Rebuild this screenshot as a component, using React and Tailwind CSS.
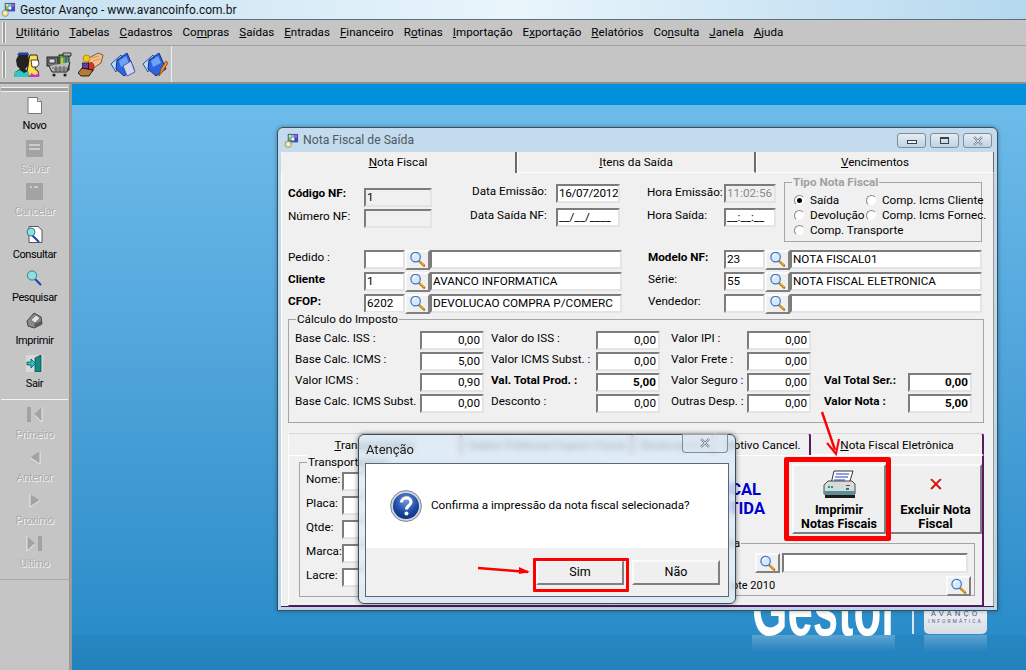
import { useId } from 'react';

const font = "font-['Roboto',sans-serif]";
const sunken = 'border-2 border-t-[#7c7c7c] border-l-[#7c7c7c] border-r-[#e4e4e4] border-b-[#e4e4e4]';
const raised = 'border-2 border-t-[#fbfbfb] border-l-[#fbfbfb] border-r-[#808080] border-b-[#808080] bg-[#efefef]';

const menus = [
  ['', 'U', 'tilitário'], ['', 'T', 'abelas'], ['', 'C', 'adastros'], ['Co', 'm', 'pras'], ['', 'S', 'aídas'],
  ['', 'E', 'ntradas'], ['', 'F', 'inanceiro'], ['R', 'o', 'tinas'], ['', 'I', 'mportação'], ['E', 'x', 'portação'],
  ['', 'R', 'elatórios'], ['Co', 'n', 'sulta'], ['', 'J', 'anela'], ['', 'A', 'juda'],
];

function AppIcon({ className }) {
  return (
    <svg viewBox="0 0 16 16" className={className}>
      <rect x="4" y="1" width="11" height="9" fill="#3a4fb0" />
      <rect x="5" y="2" width="3" height="3" fill="#ffe14d" />
      <rect x="8" y="2" width="3" height="3" fill="#48d8d8" />
      <rect x="11" y="2" width="3" height="3" fill="#d84ac0" />
      <rect x="5" y="5" width="3" height="3" fill="#60d060" />
      <rect x="8" y="5" width="3" height="3" fill="#ffffff" />
      <circle cx="4.5" cy="12" r="3.4" fill="#e8e0a0" stroke="#807850" strokeWidth="0.7" />
      <circle cx="4.5" cy="12" r="1" fill="#fff" />
    </svg>
  );
}

function Lupa() {
  return (
    <svg viewBox="0 0 18 18" className="w-[17px] h-[17px]">
      <path d="M10.5 10.5 L16 15.5" stroke="#b87a10" strokeWidth="2.6" strokeLinecap="round" />
      <path d="M11.5 11 L15.5 14.6" stroke="#f5c542" strokeWidth="1" strokeLinecap="round" />
      <circle cx="7" cy="6.5" r="5" fill="#d6e8fb" stroke="#3f76c8" strokeWidth="1.3" />
      <path d="M4 6 A3.2 3.2 0 0 1 7 3.2" stroke="#ffffff" strokeWidth="1.4" fill="none" />
    </svg>
  );
}

function People() {
  return (
    <svg viewBox="0 0 26 25" className="w-[26px] h-[25px]">
      <path d="M15 7 L16 3 H23 L24 9 L22 12 L21 17 L24 19 L25 24 H12 L14 14Z" fill="#ffe14d" stroke="#000" strokeWidth="0.8" />
      <path d="M17 8 H24 L25 12 L23 15 H18Z" fill="#fff" stroke="#000" strokeWidth="0.7" />
      <path d="M2 8 L5 2 H14 L15 8 L14 14 L11 17 L14 19 L15 25 H0 L1 20 L6 17 L3 14Z" fill="#222" />
      <path d="M3 3 L5 0.5 H14 L15 3Z" fill="#2c3f9c" />
      <path d="M0 25 L1 20 L6 18 L10 21 L14 19 L15 25Z" fill="#30c8c0" />
      <path d="M16 25 L17 21 L21 23 L25 21 V25Z" fill="#d030c0" />
    </svg>
  );
}

function Cart() {
  return (
    <svg viewBox="0 0 26 25" className="w-[26px] h-[25px]">
      <rect x="1" y="5" width="11" height="9" fill="#777" stroke="#000" strokeWidth="0.8" />
      <rect x="3" y="7" width="6" height="4" fill="#ddd" stroke="#000" strokeWidth="0.6" />
      <rect x="13" y="3" width="10" height="15" fill="#59a04a" stroke="#000" strokeWidth="0.8" />
      <rect x="15" y="6" width="2" height="10" fill="#d9c23a" />
      <rect x="19" y="5" width="2" height="11" fill="#3c62b4" />
      <path d="M17 1 H25 V4 H17Z" fill="#bbb" stroke="#000" strokeWidth="0.7" />
      <path d="M3 14 L6 20 H21 L24 10" fill="#bbb" stroke="#222" strokeWidth="1" />
      <path d="M6 16 H22 M8 18 H21 M10 14 V20 M14 14 V20 M18 14 V20" stroke="#444" strokeWidth="0.7" />
      <circle cx="8" cy="23" r="1.6" fill="#222" />
      <circle cx="19" cy="23" r="1.6" fill="#222" />
    </svg>
  );
}

function Hand() {
  return (
    <svg viewBox="0 0 26 25" className="w-[26px] h-[25px]">
      <path d="M11 6 L20 1 L25 3 L23 11 L14 17 L10 14Z" fill="#f4c090" stroke="#6a4020" strokeWidth="0.8" />
      <path d="M14 6 L21 4 M15 9 L22 7" stroke="#c08050" strokeWidth="0.7" />
      <circle cx="8.5" cy="6.5" r="3.5" fill="#f5c518" stroke="#8a6a00" strokeWidth="0.6" />
      <ellipse cx="13" cy="15" rx="3" ry="4.5" fill="#d8322a" stroke="#701010" strokeWidth="0.6" />
      <rect x="4.5" y="11" width="6" height="6" fill="#6040a8" stroke="#000" strokeWidth="0.6" />
      <path d="M0 21 L4 16 L15 18 L11 24 H3Z" fill="#b87838" stroke="#000" strokeWidth="0.8" />
    </svg>
  );
}

function Folders({ pencil }) {
  return (
    <svg viewBox="0 0 26 25" className="w-[26px] h-[25px]">
      <path d="M1 12 L11 3 L14 8 L6 20Z" fill="#b8d8f8" stroke="#103090" strokeWidth="0.8" />
      <path d="M7 8 L17 1 L24 17 L14 24 L6 17Z" fill="#2c64e0" stroke="#0c2478" strokeWidth="0.9" />
      <path d="M9 9 L16 4 L19 11 L11 15Z" fill="#6fa2f4" />
      {pencil ? (
        <path d="M17 24 L19 17 L24 9 L26 11 L21 19Z" fill="#f09020" stroke="#803000" strokeWidth="0.7" />
      ) : (
        <path d="M13 14 L21 9 L25 20 L17 24Z" fill="#d0d4f0" stroke="#30409c" strokeWidth="0.8" />
      )}
    </svg>
  );
}

function PageIcon() {
  return (
    <svg viewBox="0 0 16 17" className="w-[16px] h-[17px]">
      <path d="M1 .5 H10.5 L14.5 4.5 V16.5 H1Z" fill="#fff" stroke="#777" />
      <path d="M10.5 .5 V4.5 H14.5" fill="#ddd" stroke="#777" />
    </svg>
  );
}

function GrayDoc({ lines }) {
  return (
    <svg viewBox="0 0 17 17" className="w-[17px] h-[17px]">
      <rect x="0" y="0" width="17" height="17" fill="#a3a3a3" />
      <path d={lines} stroke="#f5f5f5" strokeWidth="1" />
    </svg>
  );
}

function ConsultIcon() {
  return (
    <svg viewBox="0 0 17 17" className="w-[17px] h-[17px]">
      <path d="M3 .5 H12 L16 4 V16.5 H3Z" fill="#fff" stroke="#555" />
      <path d="M6 9 L13 16" stroke="#1a3fb0" strokeWidth="2" />
      <circle cx="5" cy="6" r="4" fill="#8fe0e0" stroke="#3a7a90" />
    </svg>
  );
}

function SearchIcon() {
  return (
    <svg viewBox="0 0 17 17" className="w-[17px] h-[17px]">
      <path d="M9 10 L15 16" stroke="#1a3fb0" strokeWidth="2" />
      <circle cx="6" cy="6.5" r="4.6" fill="#8fe0e0" stroke="#3a7a90" />
    </svg>
  );
}

function SidePrinter() {
  return (
    <svg viewBox="0 0 17 17" className="w-[17px] h-[17px]">
      <path d="M1 9 L8 1 L15 5 L16 12 L8 16 L2 14Z" fill="#8a8a8a" stroke="#444" />
      <path d="M5 8 L10 3 L14 6 L9 11Z" fill="#e4e4e4" stroke="#555" strokeWidth="0.6" />
      <path d="M8 12 L15 9 V13 L9 16Z" fill="#5a5a5a" />
    </svg>
  );
}

function DoorIcon() {
  return (
    <svg viewBox="0 0 17 17" className="w-[17px] h-[17px]">
      <rect x="0" y="0" width="17" height="17" fill="#d8d8d8" />
      <path d="M9 3 L15 0 V17 H9Z" fill="#128a8a" stroke="#063c3c" strokeWidth="0.7" />
      <path d="M1 7 H5 V4 L9.5 8.5 L5 13 V10 H1Z" fill="#20c8c8" stroke="#063c3c" strokeWidth="0.7" />
    </svg>
  );
}

function NavIcon({ d, bar }) {
  return (
    <svg viewBox="0 0 17 17" className="w-[17px] h-[17px]">
      <path d={d} fill="#a3a3a3" />
      {bar && <path d={bar} fill="#a3a3a3" />}
      <path d={d} fill="none" stroke="#f5f5f5" strokeWidth="0.8" strokeDasharray="0 12 30" />
    </svg>
  );
}

function SideItem({ icon, label, disabled, className = '' }) {
  return (
    <div className={`flex flex-col items-center h-[43px] ${className}`}>
      <div className="h-[17px] flex items-center justify-center">{icon}</div>
      <span className={`mt-[4px] text-[11px] tracking-[-0.4px] leading-[15px] ${disabled ? 'text-[#ababab] [text-shadow:1px_1px_0_#f4f4f4]' : 'text-black'}`}>{label}</span>
    </div>
  );
}

function WinButtons() {
  return (
    <div className="flex gap-[4px]">
      <div className="w-[29px] h-[15px] rounded-[3px] border border-[#7f8c99] bg-gradient-to-b from-[#e4edf5] to-[#c2d2e0] flex items-center justify-center">
        <div className="w-[10px] h-[4px] border border-[#39424c] bg-white/60 mt-[3px]" />
      </div>
      <div className="w-[29px] h-[15px] rounded-[3px] border border-[#7f8c99] bg-gradient-to-b from-[#e4edf5] to-[#c2d2e0] flex items-center justify-center">
        <div className="w-[9px] h-[7px] border border-[#39424c] border-t-2" />
      </div>
      <div className="w-[29px] h-[15px] rounded-[3px] border border-[#7f8c99] bg-gradient-to-b from-[#e4edf5] to-[#c2d2e0] flex items-center justify-center">
        <XGlyph />
      </div>
    </div>
  );
}

function XGlyph() {
  return (
    <svg viewBox="0 0 12 10" className="w-[12px] h-[10px]">
      <path d="M2 1 L10 9 M10 1 L2 9" stroke="#7b858f" strokeWidth="2.4" />
      <path d="M2 1 L10 9 M10 1 L2 9" stroke="#eef2f5" strokeWidth="0.8" />
    </svg>
  );
}

function Input({ value, className = '', align = 'left', bold, muted }) {
  return (
    <div className={`${sunken} h-[19px] flex items-center px-[1px] text-[11.7px] leading-none overflow-hidden whitespace-nowrap ${align === 'right' ? 'justify-end pr-[2px]' : ''} ${bold ? 'font-bold' : ''} ${muted ? 'text-[#8a8a8a]' : 'text-black'} ${className}`}>
      {value}
    </div>
  );
}

function LupaButton({ className = '' }) {
  return (
    <div className={`${raised} w-[25px] h-[20px] flex items-center justify-center overflow-hidden shrink-0 ${className}`}>
      <Lupa />
    </div>
  );
}

function LookupRow({ label, code, text, bold }) {
  return (
    <div className="flex items-center h-[19px]">
      <span className={`w-[76px] pb-[4px] ${bold ? 'font-bold' : ''} shrink-0`}>{label}</span>
      <Input value={code} className="w-[41px] shrink-0 bg-white" />
      <LupaButton />
      <Input value={text} className="flex-1 bg-white" />
    </div>
  );
}

function Radio({ label, checked, className = '' }) {
  return (
    <div className={`flex items-center gap-[5px] whitespace-nowrap ${className}`}>
      <span className="w-[11px] h-[11px] rounded-full border border-[#8a8a8a] border-r-[#eee] border-b-[#eee] bg-white flex items-center justify-center shrink-0">
        {checked && <span className="w-[5px] h-[5px] rounded-full bg-black" />}
      </span>
      {label}
    </div>
  );
}

function Group({ title, className = '', titleClass = 'text-black', children }) {
  return (
    <div className={`relative border border-[#a5a5a5] ${className}`}>
      <span className={`absolute -top-[8px] left-[7px] px-[1px] bg-[#f0f0f0] leading-[14px] whitespace-nowrap ${titleClass}`}>{title}</span>
      {children}
    </div>
  );
}

function CalcColumn({ rows, labelW, className = '' }) {
  return (
    <div className={`flex flex-col ${className}`}>
      {rows.map(([label, value, bold], i) => (
        <div key={label} className={`flex items-center ${i === 0 ? 'h-[19px]' : 'h-[19px] mt-[2px]'}`}>
          <span className={`${labelW} pb-[4px] shrink-0 whitespace-nowrap ${bold ? 'font-bold' : ''}`}>{label}</span>
          <Input value={value} bold={bold} align="right" className="w-[64px] bg-white" />
        </div>
      ))}
    </div>
  );
}

function QuestionIcon() {
  const id = useId();
  return (
    <svg viewBox="0 0 32 32" className="w-[32px] h-[32px] shrink-0">
      <defs>
        <radialGradient id={id} cx="50%" cy="30%" r="75%">
          <stop offset="0" stopColor="#6f98dc" />
          <stop offset="0.6" stopColor="#1d4aa6" />
          <stop offset="1" stopColor="#0c2a78" />
        </radialGradient>
      </defs>
      <circle cx="16" cy="16" r="15.4" fill="#cfd6de" stroke="#7c8794" />
      <circle cx="16" cy="16" r="13" fill={`url(#${id})`} />
      <path d="M11.5 12.5 C11.5 6.5 21 6.5 21 12 C21 15.5 16.5 15.5 16.5 19.5" fill="none" stroke="#fff" strokeWidth="3.2" />
      <circle cx="16.5" cy="23.5" r="2" fill="#fff" />
    </svg>
  );
}

function PrinterIcon() {
  return (
    <svg viewBox="0 0 33 30" className="w-[33px] h-[30px]">
      <path d="M8 14 L11 1 H30 L26 14Z" fill="#fff" stroke="#000" strokeWidth="0.8" />
      <path d="M13 4 H26 M12 7 H25 M11 10 H22" stroke="#2040c0" strokeWidth="1.2" />
      <path d="M1 15 L5 11 H29 L32 14 V24 H1Z" fill="#d5dcdc" stroke="#222" strokeWidth="0.8" />
      <rect x="1" y="21" width="31" height="4" fill="#5f8f90" />
      <rect x="2" y="25" width="30" height="3" fill="#1c1c1c" />
      <rect x="5" y="16" width="2" height="2" fill="#10a860" />
      <rect x="8" y="16" width="2" height="2" fill="#10a860" />
      <rect x="23" y="15" width="4" height="1" fill="#d02020" />
      <rect x="23" y="18" width="3" height="2" fill="#108090" />
    </svg>
  );
}

function MainWindow() {
  return (
    <div className="absolute left-[205px] top-[43px] w-[721px] h-[484px] rounded-t-[6px] border border-[#3d4c57] bg-gradient-to-b from-[#c3dbec] to-[#b9d6ea] flex flex-col shadow-[0_0_4px_rgba(0,0,0,0.35)]">
      <div className="h-[24px] shrink-0 flex items-center pl-[6px] pr-[5px] pt-[1px]">
        <AppIcon className="w-[15px] h-[15px]" />
        <span className="ml-[4px] text-[12.2px] text-[#4e5a66] flex-1">Nota Fiscal de Saída</span>
        <WinButtons />
      </div>
      <div className="mx-[3px] mb-[3px] flex-1 flex flex-col min-h-0 bg-[#f0f0f0] border-b border-[#4b1a55]">
        <div className="h-[21px] shrink-0 flex text-center leading-[20px] bg-white">
          <div className="w-[236px] bg-[#f0f0f0] border-r-2 border-[#6b6b6b] rounded-tl-[3px]"><u>N</u>ota Fiscal</div>
          <div className="w-[238px] ml-[1px] bg-[#f0f0f0] border-r-2 border-[#6b6b6b] border-b border-b-[#fff]"><u>I</u>tens da Saída</div>
          <div className="flex-1 ml-[1px] bg-[#f0f0f0] border-r border-[#6b6b6b] border-b border-b-[#fff]"><u>V</u>encimentos</div>
        </div>
        <Form />
      </div>
    </div>
  );
}

function Form() {
  return (
    <div className="flex-1 flex flex-col pl-[6px] pr-[8px] border-r border-[#9a9a9a] border-l border-l-[#fff]">
      <div className="flex items-start h-[77px] pt-[9px]">
        <div className="w-[144px] mt-[6px] flex flex-col gap-[2px] shrink-0">
          <div className="flex items-center h-[19px]"><span className="w-[76px] pb-[8px] font-bold">Código NF:</span><Input value="1" className="w-[68px] bg-[#f0f0f0]" /></div>
          <div className="flex items-center h-[19px]"><span className="w-[76px] pb-[4px]">Número NF:</span><Input value="" className="w-[68px] bg-[#f0f0f0]" /></div>
        </div>
        <div className="ml-[38px] w-[150px] mt-[2px] flex flex-col gap-[5px] shrink-0">
          <div className="flex items-center justify-between h-[19px] whitespace-nowrap"><span className="ml-[2px] pb-[4px]">Data Emissão:</span><Input value="16/07/2012" className="w-[64px] bg-white tracking-[-0.3px]" /></div>
          <div className="flex items-center justify-between h-[19px] whitespace-nowrap"><span className="pb-[4px]">Data Saída NF:</span><Input value="__/__/____" className="w-[64px] bg-white" /></div>
        </div>
        <div className="ml-[27px] w-[129px] mt-[2px] flex flex-col gap-[5px] shrink-0">
          <div className="flex items-center justify-between h-[19px] whitespace-nowrap"><span className="pb-[2px]">Hora Emissão:</span><Input value="11:02:56" muted className="w-[52px] bg-[#f0f0f0]" /></div>
          <div className="flex items-center justify-between h-[19px] whitespace-nowrap"><span className="pb-[4px]">Hora Saída:</span><Input value="__:__:__" className="w-[52px] bg-white" /></div>
        </div>
        <Group title="Tipo Nota Fiscal" titleClass="font-bold text-[#a0a0a0]" className="ml-[8px] w-[198px] h-[60px] shrink-0 pl-[9px] pt-[10px]">
          <div className="flex flex-col gap-[1px] leading-[14px]">
            <div className="flex"><Radio label="Saída" checked className="w-[72px] shrink-0" /><Radio label="Comp. Icms Cliente" /></div>
            <div className="flex"><Radio label="Devolução" className="w-[72px] shrink-0" /><Radio label="Comp. Icms Fornec." /></div>
            <Radio label="Comp. Transporte" />
          </div>
        </Group>
      </div>
      <div className="flex gap-[26px] h-[69px]">
        <div className="w-[334px] flex flex-col gap-[3px]">
          <LookupRow label="Pedido :" code="" text="" />
          <LookupRow label="Cliente" code="1" text="AVANCO INFORMATICA" bold />
          <LookupRow label="CFOP:" code="6202" text="DEVOLUCAO COMPRA P/COMERC" bold />
        </div>
        <div className="w-[334px] flex flex-col gap-[3px]">
          <LookupRow label="Modelo NF:" code="23" text="NOTA FISCAL01" bold />
          <LookupRow label="Série:" code="55" text="NOTA FISCAL ELETRONICA" />
          <LookupRow label="Vendedor:" code="" text="" />
        </div>
      </div>
      <Group title="Cálculo do Imposto" className="w-[696px] h-[104px] shrink-0 pl-[6px] pt-[11px] flex">
        <CalcColumn labelW="w-[125px]" rows={[['Base Calc. ISS :', '0,00'], ['Base Calc. ICMS :', '5,00'], ['Valor ICMS :', '0,90'], ['Base Calc. ICMS Subst. :', '0,00']]} />
        <CalcColumn labelW="w-[105px]" className="ml-[7px]" rows={[['Valor do ISS :', '0,00'], ['Valor ICMS Subst. :', '0,00'], ['Val. Total Prod. :', '5,00', true], ['Desconto :', '0,00']]} />
        <CalcColumn labelW="w-[76px]" className="ml-[11px]" rows={[['Valor IPI :', '0,00'], ['Valor Frete :', '0,00'], ['Valor Seguro :', '0,00'], ['Outras Desp. :', '0,00']]} />
        <CalcColumn labelW="w-[84px]" className="ml-[13px] mt-[42px]" rows={[['Val Total Ser.:', '0,00', true], ['Valor Nota :', '5,00', true]]} />
      </Group>
      <LowerTabs />
    </div>
  );
}

function LowerTabs() {
  const tab = 'h-[22px] bg-[#f0f0f0] border-t border-r-2 border-[#d9d9d9] border-r-[#5a1a60] rounded-t-[3px] text-center leading-[22px] whitespace-nowrap';
  return (
    <div className="mt-[10px] w-[696px] flex flex-col">
      <div className="flex">
        <div className={`${tab} w-[174px] border-l border-l-[#fff]`}><u>T</u>ransportadora</div>
        <div className={`${tab} w-[170px] ml-[1px]`}>Dados Públicos/Cupom Fiscal</div>
        <div className={`${tab} w-[80px] ml-[1px]`}>Observações</div>
        <div className={`${tab} w-[96px] ml-[1px]`}>Motivo Cancel.</div>
        <div className={`${tab} flex-1 ml-[1px] border-b border-b-[#fff]`}><u>N</u>ota Fiscal Eletrônica</div>
      </div>
      <div className="h-[151px] flex border border-l-[#fff] border-t-[#fff] border-r-2 border-r-[#5a1a60] border-b-[#5a1a60] pl-[10px] pt-[6px]">
        <Group title="Transportadora" className="w-[300px] h-[135px] shrink-0 px-[6px] pt-[9px] flex flex-col gap-[5px]">
          {['Nome:', 'Placa:', 'Qtde:', 'Marca:', 'Lacre:'].map(label => (
            <div key={label} className="flex items-center h-[19px]">
              <span className="w-[36px] pb-[4px] shrink-0">{label}</span>
              <Input value="" className="w-[200px] bg-white" />
            </div>
          ))}
        </Group>
        <div className="ml-[19px] w-[365px] flex flex-col">
          <div className="flex items-stretch h-[70px] mt-[2px]">
            <div className="w-[174px] pr-[27px] text-right text-[16.5px] leading-[19px] font-bold text-[#0000c8] flex flex-col justify-center">
              <span className="mr-[4px]">NOTA FISCAL</span>
              <span>EMITIDA</span>
            </div>
            <div className={`${raised} w-[94px] flex flex-col items-center pt-[4px] font-bold text-[12.5px] leading-[14px] text-center shrink-0 border-r-[#1a1a1a] border-b-[#1a1a1a]`}>
              <PrinterIcon />
              <span className="mt-[3px]">Imprimir<br />Notas Fiscais</span>
            </div>
            <div className={`${raised} w-[93px] ml-[3px] flex flex-col items-center pt-[4px] font-bold text-[13px] leading-[14px] text-center shrink-0`}>
              <span className="text-[#d01010] text-[19px] leading-[30px] font-normal">✕</span>
              <span className="mt-[3px]">Excluir Nota<br />Fiscal</span>
            </div>
          </div>
          <Group title="Série Nota" className="mt-[9px] w-[357px] h-[53px] shrink-0 pl-[136px] pr-[6px] pt-[9px] [&>span]:left-[66px]">
            <div className="flex h-[20px]">
              <LupaButton />
              <Input value="" className="flex-1 ml-[2px] bg-white h-[20px]" />
            </div>
            <div className="flex items-center justify-between -ml-[29px] -mr-[3px] mt-[3px]">
              <span className="text-[11px]">Lote 2010</span>
              <LupaButton className="h-[19px]" />
            </div>
          </Group>
        </div>
      </div>
    </div>
  );
}

function AlertDialog() {
  return (
    <div className="absolute left-[286px] top-[350px] w-[378px] h-[170px] rounded-[6px] border border-[#3f4a52] bg-[#d8eaf6]/70 backdrop-blur-[3px] shadow-[0_0_5px_rgba(0,0,0,0.5)] flex flex-col px-[6px] pb-[6px]">
      <div className="h-[28px] shrink-0 relative flex items-center">
        <span className="text-[13px] text-[#1c1c1c] pl-[1px] pt-[1px]">Atenção</span>
        <div className="absolute -top-[1px] right-[1px] w-[46px] h-[19px] rounded-b-[4px] border border-[#7f8c99] border-t-0 bg-[#dce8f1]/60 flex items-center justify-center">
          <XGlyph />
        </div>
      </div>
      <div className="flex-1 border border-[#5c6770] flex flex-col">
        <div className="h-[84px] bg-white flex items-center pl-[24px] gap-[9px]">
          <QuestionIcon />
          <span className="text-[11.7px] text-black mt-[-1px] whitespace-nowrap">Confirma a impressão da nota fiscal selecionada?</span>
        </div>
        <div className="flex-1 bg-[#f0f0f0] flex justify-end gap-[8px] pt-[12px] pr-[8px]">
          <div className={`${raised} w-[88px] h-[25px] flex items-center justify-center text-[12.5px]`}>Sim</div>
          <div className={`${raised} w-[88px] h-[25px] flex items-center justify-center text-[12.5px]`}>Não</div>
        </div>
      </div>
    </div>
  );
}

function Annotations() {
  return (
    <>
      <div className="absolute left-[712px] top-[373px] w-[107px] h-[84px] border-[5px] border-[#ff0000] rounded-[2px]" />
      <div className="absolute left-[461px] top-[474px] w-[96px] h-[34px] border-[3px] border-[#ff0000] rounded-[1px]" />
      <svg className="absolute left-[400px] top-[320px] w-[450px] h-[170px]" viewBox="0 0 450 170">
        <path d="M350 8 L363 46" stroke="#ff0000" strokeWidth="2.4" />
        <path d="M355 39 L364 50 L367 35" fill="none" stroke="#ff0000" strokeWidth="2" />
        <path d="M6 164 L56 168" stroke="#ff0000" strokeWidth="2.4" />
        <path d="M47 163 L58 168 L47 170Z" fill="#ff0000" />
      </svg>
    </>
  );
}

function Logo() {
  return (
    <>
      <div className="absolute left-[680px] top-[487px] flex items-start">
        <span className="block w-[143px] origin-left scale-x-[.6] text-[76px] leading-[75px] font-bold text-white whitespace-nowrap font-['Liberation_Sans',sans-serif]">Gestor</span>
      </div>
      <div className="absolute left-[840px] top-[510px] w-[2px] h-[40px] bg-white/80" />
      <div className="absolute left-[852px] top-[510px] w-[63px] h-[40px] rounded-b-[5px] bg-gradient-to-b from-white to-[#d8dde4] flex flex-col items-center pt-[16px] text-[#5a5a94]">
        <span className="text-[8px] leading-[8px] tracking-[3px]">AVANÇO</span>
        <span className="text-[5px] leading-[7px] tracking-[2px]">INFORMÁTICA</span>
      </div>
      <div className="absolute left-[680px] top-[551px] w-[143px] h-[16px] bg-gradient-to-b from-white/25 to-transparent" />
      <div className="absolute left-[852px] top-[551px] w-[63px] h-[16px] bg-gradient-to-b from-white/25 to-transparent" />
    </>
  );
}

export default function App() {
  return (
    <div className={`w-[1026px] h-[670px] overflow-hidden flex flex-col bg-[#c5c5c5] text-[11.7px] text-black ${font}`}>
      <div className="h-[20px] shrink-0 flex items-center pl-[1px] bg-gradient-to-r from-[#c4e0f2] via-[#e9f5fb] to-[#b5d8ee] border-b border-[#5d6f7d]">
        <AppIcon className="w-[15px] h-[15px]" />
        <span className="ml-[4px] text-[12px] text-[#111]">Gestor Avanço - www.avancoinfo.com.br</span>
      </div>
      <div className="h-[26px] shrink-0 flex items-center pl-[2px] border-b border-[#a0a0a0]">
        <div className="w-[4px] h-[21px] border-x border-[#f0f0f0] bg-[#9d9d9d]" />
        <div className="flex ml-[10px] gap-[10px] text-[11.6px]">
          {menus.map(([a, b, c]) => (
            <span key={b + c} className="whitespace-nowrap">{a}<u>{b}</u>{c}</span>
          ))}
        </div>
      </div>
      <div className="h-[38px] shrink-0 flex border-b-2 border-[#8d8d8d]">
        <div className="w-[172px] flex items-center pl-[2px] border-r border-[#eeeeee]">
          <div className="w-[4px] h-[27px] border-x border-[#f0f0f0] bg-[#9d9d9d]" />
          <div className="flex items-center ml-[8px] gap-[6px]">
            <People />
            <Cart />
            <Hand />
            <Folders />
            <Folders pencil />
          </div>
        </div>
      </div>
      <div className="flex-1 flex min-h-0">
        <aside className="w-[72px] shrink-0 flex flex-col border-r-[3px] border-[#9a9a9a] pt-[3px]">
          <div className="h-[5px] mx-[1px] border-y border-[#f0f0f0] bg-[#a4a4a4]" />
          <div className="mt-[5px] flex flex-col">
            <SideItem icon={<PageIcon />} label="Novo" />
            <SideItem icon={<GrayDoc lines="M3 5 H14 M3 9 H14" />} label="Salvar" disabled />
            <SideItem icon={<GrayDoc lines="M4 4 H6 M8 4 H12" />} label="Cancelar" disabled />
            <SideItem icon={<ConsultIcon />} label="Consultar" />
            <SideItem icon={<SearchIcon />} label="Pesquisar" />
            <SideItem icon={<SidePrinter />} label="Imprimir" />
            <SideItem icon={<DoorIcon />} label="Sair" />
          </div>
          <div className="h-[1px] mx-[1px] bg-[#f4f4f4] mt-[1px]" />
          <div className="mt-[6px] flex flex-col">
            <SideItem disabled label="Primeiro" icon={<NavIcon d="M16 1 L8 8.5 L16 16Z" bar="M1 1 H5 V16 H1Z" />} />
            <SideItem disabled label="Anterior" icon={<NavIcon d="M14 2 L4 8.5 L14 15Z" />} />
            <SideItem disabled label="Proximo" icon={<NavIcon d="M4 2 L14 8.5 L4 15Z" />} />
            <SideItem disabled label="Ultimo" icon={<NavIcon d="M1 1 L9 8.5 L1 16Z" bar="M12 1 H16 V16 H12Z" />} />
          </div>
          <div className="h-[1px] bg-[#a8a8a8] mt-[1px]" />
        </aside>
        <main className="relative flex-1 overflow-hidden bg-gradient-to-b from-[#70bdec] to-[#2389c6] flex flex-col">
          <div className="h-[21px] shrink-0 bg-[#0090dc]" />
          <div className="flex-1" />
          <div className="h-[35px] shrink-0 bg-[#1f5f94]/15" />
          <Logo />
          <MainWindow />
          <AlertDialog />
          <Annotations />
        </main>
      </div>
    </div>
  );
}
